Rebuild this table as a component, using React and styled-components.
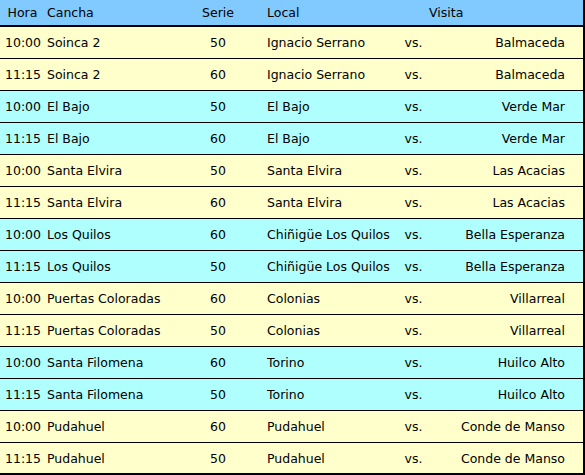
import React from 'react';
import styled, { createGlobalStyle } from 'styled-components';

const GlobalStyle = createGlobalStyle`
  body {
    margin: 0;
    background: #ffffff;
    font-family: "DejaVu Sans", Verdana, sans-serif;
  }
`;

// hora | cancha | serie | local | vs | visita | trailing space
const COLUMNS = '45px 145px 56px 152px 31px 136px 1fr';

const Table = styled.div`
  width: 585px;
  box-sizing: border-box;
  border-right: 2px solid #000;
  border-bottom: 2px solid #000;
  font-size: 12.5px;
  color: #000;
`;

const HeaderRow = styled.div`
  display: grid;
  grid-template-columns: ${COLUMNS};
  align-items: center;
  height: 25px;
  background: #80caff;
  border-bottom: 2px solid #000;
`;

const Row = styled.div`
  display: grid;
  grid-template-columns: ${COLUMNS};
  align-items: center;
  height: 31px;
  background: ${(p) => (p.$tone === 'cyan' ? '#b0ffff' : '#ffffcc')};
  border-bottom: 1px solid #000;

  &:last-child {
    height: 30px;
    border-bottom: none;
  }
`;

const Cell = styled.div`
  white-space: nowrap;
  text-align: ${(p) => p.$align || 'left'};
  padding-left: ${(p) => (p.$pad != null ? p.$pad : 0)}px;
`;

const matches = [
  ['10:00', 'Soinca 2', 50, 'Ignacio Serrano', 'Balmaceda'],
  ['11:15', 'Soinca 2', 60, 'Ignacio Serrano', 'Balmaceda'],
  ['10:00', 'El Bajo', 50, 'El Bajo', 'Verde Mar'],
  ['11:15', 'El Bajo', 60, 'El Bajo', 'Verde Mar'],
  ['10:00', 'Santa Elvira', 50, 'Santa Elvira', 'Las Acacias'],
  ['11:15', 'Santa Elvira', 60, 'Santa Elvira', 'Las Acacias'],
  ['10:00', 'Los Quilos', 60, 'Chiñigüe Los Quilos', 'Bella Esperanza'],
  ['11:15', 'Los Quilos', 50, 'Chiñigüe Los Quilos', 'Bella Esperanza'],
  ['10:00', 'Puertas Coloradas', 60, 'Colonias', 'Villarreal'],
  ['11:15', 'Puertas Coloradas', 50, 'Colonias', 'Villarreal'],
  ['10:00', 'Santa Filomena', 60, 'Torino', 'Huilco Alto'],
  ['11:15', 'Santa Filomena', 50, 'Torino', 'Huilco Alto'],
  ['10:00', 'Pudahuel', 60, 'Pudahuel', 'Conde de Manso'],
  ['11:15', 'Pudahuel', 50, 'Pudahuel', 'Conde de Manso'],
];

const App = () => {
  return (
    <>
      <GlobalStyle />
      <Table>
        <HeaderRow>
          <Cell $align="center">Hora</Cell>
          <Cell $pad={2}>Cancha</Cell>
          <Cell $align="center">Serie</Cell>
          <Cell $pad={21}>Local</Cell>
          <Cell />
          <Cell>Visita</Cell>
          <Cell />
        </HeaderRow>
        {matches.map(([hora, cancha, serie, local, visita], i) => (
          <Row key={i} $tone={Math.floor(i / 2) % 2 === 1 ? 'cyan' : 'yellow'}>
            <Cell $pad={5}>{hora}</Cell>
            <Cell $pad={2}>{cancha}</Cell>
            <Cell $align="center">{serie}</Cell>
            <Cell $pad={21}>{local}</Cell>
            <Cell $align="center">vs.</Cell>
            <Cell $align="right">{visita}</Cell>
            <Cell />
          </Row>
        ))}
      </Table>
    </>
  );
};

export default App;
